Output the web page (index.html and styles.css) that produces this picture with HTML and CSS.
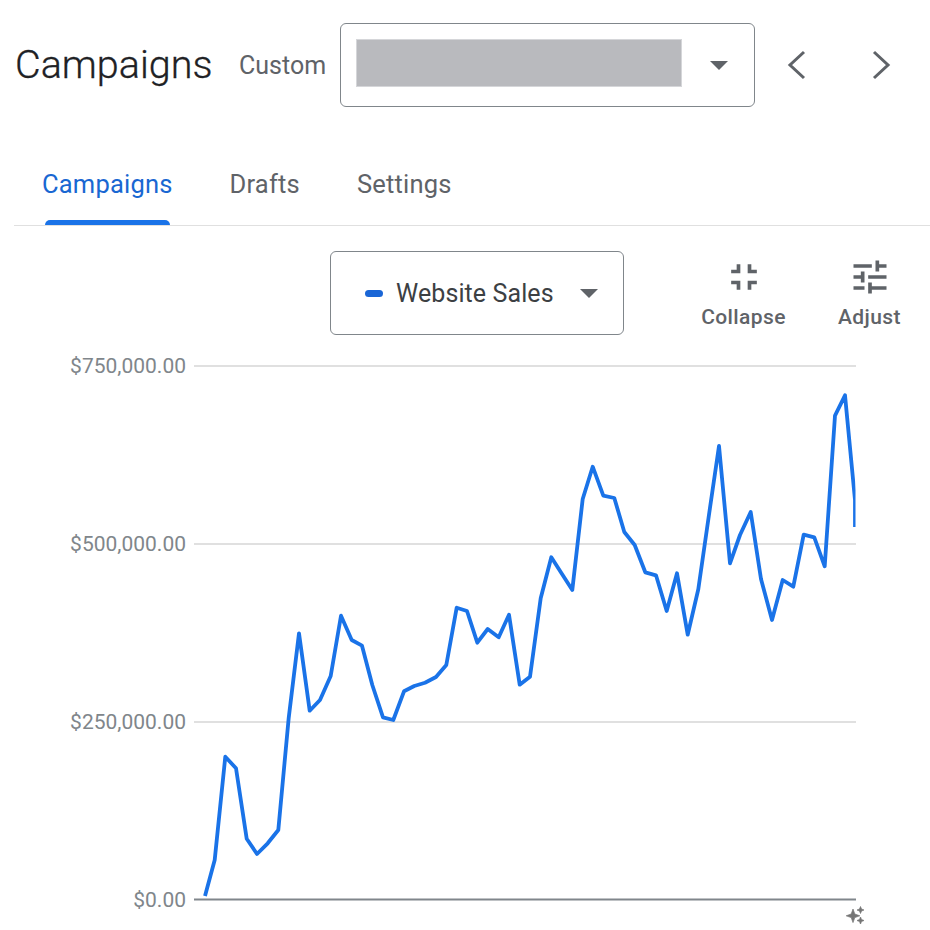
FILE: index.html
```
<!DOCTYPE html>
<html lang="en">
<head>
<meta charset="utf-8">
<title>Campaigns</title>
<link rel="stylesheet" href="styles.css">
</head>
<body>
<header class="header">
  <h1 class="title">Campaigns</h1>
  <span class="range-label">Custom</span>
  <div class="select date-select">
    <div class="redacted"></div>
    <svg class="caret" viewBox="0 0 18 9"><path d="M0 0h18L9 9z"/></svg>
  </div>
  <button class="nav-btn" aria-label="Previous">
    <svg viewBox="0 0 20 32"><path d="M17 3 3 16l14 13"/></svg>
  </button>
  <button class="nav-btn" aria-label="Next">
    <svg viewBox="0 0 20 32"><path d="M3 3l14 13L3 29"/></svg>
  </button>
</header>
<nav class="tabs">
  <a class="tab active">Campaigns</a>
  <a class="tab">Drafts</a>
  <a class="tab">Settings</a>
</nav>
<section class="toolbar">
  <div class="select metric-select">
    <span class="pill"></span>
    <span class="metric-name">Website Sales</span>
    <svg class="caret" viewBox="0 0 18 9"><path d="M0 0h18L9 9z"/></svg>
  </div>
  <div class="tool collapse">
    <svg viewBox="0 0 24 24"><path d="M5 16h3v3h2v-5H5v2zm3-8H5v2h5V5H8v3zm6 11h2v-3h3v-2h-5v5zm2-11V5h-2v5h5V8h-3z"/></svg>
    <span>Collapse</span>
  </div>
  <div class="tool adjust">
    <svg viewBox="0 0 24 24"><path d="M3 17v2h6v-2H3zM3 5v2h10V5H3zm10 16v-2h8v-2h-8v-2h-2v6h2zM7 9v2H3v2h4v2h2V9H7zm14 4v-2H11v2h10zm-6-4h2V7h4V5h-4V3h-2v6z"/></svg>
    <span>Adjust</span>
  </div>
</section>
<svg class="chart" viewBox="0 340 930 590" width="930" height="590">
  <defs><clipPath id="plot"><rect x="194" y="350" width="661.5" height="560"/></clipPath></defs>
  <line class="grid" x1="194" y1="366" x2="856" y2="366"/>
  <line class="grid" x1="194" y1="544" x2="856" y2="544"/>
  <line class="grid" x1="194" y1="722" x2="856" y2="722"/>
  <line class="axis" x1="194" y1="899.5" x2="856" y2="899.5"/>
  <text class="tick" x="186" y="373">$750,000.00</text>
  <text class="tick" x="186" y="551">$500,000.00</text>
  <text class="tick" x="186" y="729">$250,000.00</text>
  <text class="tick" x="186" y="907">$0.00</text>
  <polyline class="series" clip-path="url(#plot)" points="205,896 214.7,860 225.3,756.7 236,768.3 246.7,838.7 257,854 267.7,843.3 278.3,830 288.7,718 299,633.3 309.7,710.7 320,700 330.7,676 341,615.7 351.7,640 362,645.7 372.3,685 383,717.3 393.3,720 404,691.3 414.3,686 425,682.7 436,677 446.3,665 456.7,607.7 467,611 477.3,642.7 487.7,629 498.7,637.3 509,614.7 519.7,684.7 530,676.7 540.7,598.3 551.3,557.3 562,574 572.3,590 582.7,499 592.7,466.7 603.3,495.7 614.3,498 624.3,532 634.7,545 645.3,572.3 656,575.3 666.7,611 677,573.3 687.7,634.7 698.3,589.3 708.7,516.7 719,446 730,563.3 740,535 750.7,512 761,579 772,620 782.7,580 793.3,586.7 803.7,534.7 814.3,537.3 824.7,566.3 835,415.7 845,395.3 855,500 855,527"/>
  <path class="sparkle" d="M853 909l1.800 5 5 1.800-5 1.800-1.800 5-1.800-5-5-1.800 5-1.800zM860.500 906.500l1 2.500 2.500 1-2.500 1-1 2.500-1-2.500-2.500-1 2.500-1zM860.500 917l1 2.500 2.500 1-2.500 1-1 2.500-1-2.500-2.500-1 2.500-1z"/>
</svg>
</body>
</html>
```
FILE: styles.css
```
* { box-sizing: border-box; }
html, body { margin: 0; background: #fff; }
body { width: 930px; height: 930px; overflow: hidden; font-family: Roboto, "Liberation Sans", sans-serif; color: #5f6368; }

.header { display: flex; align-items: center; height: 130px; padding: 0 0 0 15px; }
.header > * { flex: none; }
.title { margin: 0 29px 0 0; width: 195px; font: 300 39.5px/1 Roboto, sans-serif; color: #202124; white-space: nowrap; -webkit-text-stroke: .3px #202124; }
.range-label { width: 87px; margin-right: 14px; font-size: 25px; }
.select { display: flex; align-items: center; background: #fff; border: 1px solid #80868b; border-radius: 6px; }
.date-select { width: 415px; height: 84px; padding-left: 15px; margin-right: 24px; }
.redacted { width: 326px; height: 48px; margin: 0 28px 4px 0; background: #b9babe; border: 1px solid #d5d6d9; }
.caret { flex: none; width: 18px; height: 9px; fill: #5f6368; }
.nav-btn { width: 36px; height: 36px; padding: 0; margin-right: 48px; border: 0; background: none; display: flex; align-items: center; justify-content: center; }
.nav-btn svg { width: 20px; height: 32px; fill: none; stroke: #5f6368; stroke-width: 3; }

.tabs { display: flex; height: 96px; margin-left: 14px; border-bottom: 1px solid #e0e0e0; padding-left: 28px; gap: 57px; }
.tab { position: relative; height: 95px; font-size: 25.5px; letter-spacing: .2px; line-height: 108px; color: #5f6368; }
.tab.active { color: #1967d2; }
.tab.active::after { content: ""; position: absolute; left: 3px; right: 3px; bottom: 0; height: 5px; background: #1a73e8; border-radius: 5px 5px 0 0; }

.toolbar { display: flex; align-items: flex-start; height: 114px; padding: 25px 0 0 330px; }
.metric-select { flex: none; width: 294px; height: 84px; padding-left: 34px; margin-right: 77px; }
.pill { flex: none; width: 18px; height: 7px; border-radius: 4px; background: #1a66d6; margin-right: 13px; }
.metric-name { flex: none; width: 184px; font-size: 25px; letter-spacing: .1px; color: #3c4043; }
.tool { flex: none; display: flex; flex-direction: column; align-items: center; font-size: 21px; font-weight: 500; line-height: 26px; letter-spacing: .4px; }
.tool svg { width: 44px; height: 44px; fill: #5f6368; margin: 4px 0 5px; }
.collapse { width: 85px; margin-right: 52px; }
.adjust { width: 63px; }

.chart { display: block; }
.grid { stroke: #e0e0e0; stroke-width: 2; }
.axis { stroke: #80868b; stroke-width: 2; }
.tick { font-size: 21px; fill: #80868b; text-anchor: end; font-family: Roboto, sans-serif; }
.series { fill: none; stroke: #1a73e8; stroke-width: 3.800; stroke-linejoin: round; }
.sparkle { fill: #757575; stroke: #757575; stroke-width: .7; }
```
